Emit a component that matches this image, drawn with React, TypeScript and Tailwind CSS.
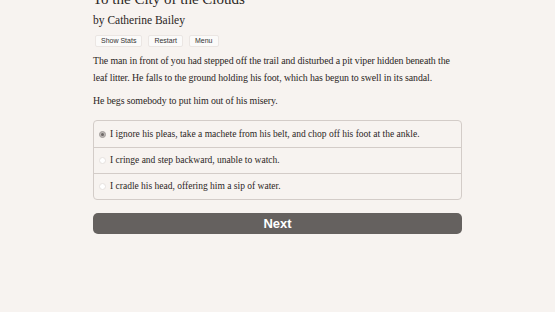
import { useState } from "react";

const choices = [
  "I ignore his pleas, take a machete from his belt, and chop off his foot at the ankle.",
  "I cringe and step backward, unable to watch.",
  "I cradle his head, offering him a sip of water.",
];

export default function App() {
  const [selected, setSelected] = useState(0);

  return (
    <div className="w-[555px] h-[312px] overflow-hidden bg-[#f7f3f0] text-[#2b2624] font-['Liberation_Serif',serif]">
      <div className="w-[369px] ml-[93px]">
        <h1 className="text-[15px] leading-[20px] mt-[-11px] text-[#2b2624]">To the City of the Clouds</h1>
        <p className="text-[11.5px] leading-[16px] mt-[3px]">by Catherine Bailey</p>
        <div className="flex gap-[6px] mt-[7px] ml-[2px] font-['Liberation_Sans',sans-serif] text-[7px] leading-[10px] text-[#333]">
          <button className="px-[5px] py-[0px] bg-[#fbfaf9] border border-[#ebe6e3] rounded-[2px]">Show Stats</button>
          <button className="px-[5px] py-[0px] bg-[#fbfaf9] border border-[#ebe6e3] rounded-[2px]">Restart</button>
          <button className="px-[5px] py-[0px] bg-[#fbfaf9] border border-[#ebe6e3] rounded-[2px]">Menu</button>
        </div>
        <p className="text-[9.9px] tracking-[-0.1px] leading-[17px] mt-[5px]">
          The man in front of you had stepped off the trail and disturbed a pit viper hidden beneath the leaf litter. He falls to the ground holding his foot, which has begun to swell in its sandal.
        </p>
        <p className="text-[9.9px] tracking-[-0.1px] leading-[17px] mt-[6px]">He begs somebody to put him out of his misery.</p>
        <div className="mt-[11px] border border-[#d3ccc8] rounded-[4px]">
          {choices.map((c, i) => (
            <label
              key={i}
              onClick={() => setSelected(i)}
              className={`flex items-center gap-[4px] h-[26px] px-[5px] text-[9.5px] ${i > 0 ? "border-t border-[#d3ccc8]" : ""}`}
            >
              <span
                className={`w-[7px] h-[7px] rounded-full shrink-0 flex items-center justify-center ${
                  selected === i ? "bg-[#bdb8b6] border border-[#a39e9c]" : "bg-white border border-[#e6e2df]"
                }`}
              >
                {selected === i && <span className="w-[3px] h-[3px] rounded-full bg-[#6d6866]" />}
              </span>
              {c}
            </label>
          ))}
        </div>
        <button className="mt-[13px] w-full h-[21px] rounded-[5px] bg-[#65615f] text-white font-['Liberation_Sans',sans-serif] font-bold text-[13px] leading-[21px]">
          Next
        </button>
      </div>
    </div>
  );
}
